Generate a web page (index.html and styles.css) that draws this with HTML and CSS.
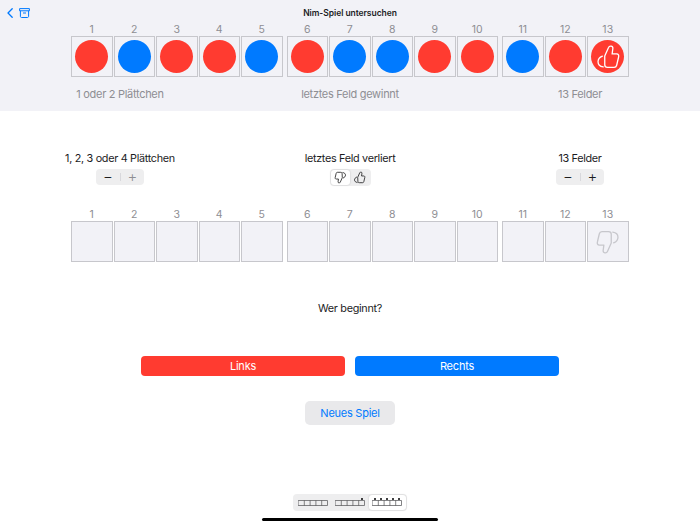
FILE: index.html
```html
<!DOCTYPE html>
<html lang="de">
<head>
  <meta charset="UTF-8">
  <meta name="viewport" content="width=device-width, initial-scale=1.0">
  <title>Nim-Spiel untersuchen</title>
  <link rel="stylesheet" href="styles.css">
</head>
<body>
  <!-- Icons -->
  <svg class="defs" width="0" height="0">
    <symbol id="thumb" viewBox="0 0 24 24">
      <path d="M9 11 L12.5 3.2 C13.3 1.3 16.7 1.6 16.5 4 L15.8 9.2 H20 C21.6 9.2 22.2 10.6 21.8 12 L20 19.6 C19.7 20.9 18.8 21.6 17.6 21.6 H11.5 C10 21.6 9 20.7 9 19.2 Z"/>
      <path d="M6.8 11.2 C4.3 12.2 2.8 14.2 2.8 16.4 C2.8 18.8 4.6 20.8 7.6 21.2"/>
    </symbol>
    <symbol id="mini" viewBox="0 0 30 10">
      <path d="M.5 2.5 H29.5 V7.5 H.5 Z M6.3 2.5 V7.5 M12.1 2.5 V7.5 M17.9 2.5 V7.5 M23.7 2.5 V7.5"/>
    </symbol>
  </svg>

  <!-- Played game -->
  <div class="top">
    <div class="toolbar">
      <div class="tools">
        <svg class="back" viewBox="0 0 6 10"><path d="M5.2 .8 L1 5 L5.2 9.2"/></svg>
        <svg class="archive" viewBox="0 0 11 10"><path d="M.6 .6 H10.4 V2.8 H.6 Z M1.4 2.8 V8.4 C1.4 9 1.9 9.5 2.5 9.5 H8.5 C9.1 9.5 9.6 9 9.6 8.4 V2.8 M4 5 H7"/></svg>
      </div>
      <h1>Nim-Spiel untersuchen</h1>
    </div>
    <div class="board">
      <div class="group">
        <div class="slot"><span>1</span><div class="cell"><i class="chip red"></i></div></div>
        <div class="slot"><span>2</span><div class="cell"><i class="chip blue"></i></div></div>
        <div class="slot"><span>3</span><div class="cell"><i class="chip red"></i></div></div>
        <div class="slot"><span>4</span><div class="cell"><i class="chip red"></i></div></div>
        <div class="slot"><span>5</span><div class="cell"><i class="chip blue"></i></div></div>
      </div>
      <div class="group">
        <div class="slot"><span>6</span><div class="cell"><i class="chip red"></i></div></div>
        <div class="slot"><span>7</span><div class="cell"><i class="chip blue"></i></div></div>
        <div class="slot"><span>8</span><div class="cell"><i class="chip blue"></i></div></div>
        <div class="slot"><span>9</span><div class="cell"><i class="chip red"></i></div></div>
        <div class="slot"><span>10</span><div class="cell"><i class="chip red"></i></div></div>
      </div>
      <div class="group">
        <div class="slot"><span>11</span><div class="cell"><i class="chip blue"></i></div></div>
        <div class="slot"><span>12</span><div class="cell"><i class="chip red"></i></div></div>
        <div class="slot"><span>13</span><div class="cell"><i class="chip red"><svg class="thumb-win"><use href="#thumb"/></svg></i></div></div>
      </div>
    </div>
    <div class="captions">
      <p>1 oder 2 Plättchen</p>
      <p>letztes Feld gewinnt</p>
      <p>13 Felder</p>
    </div>
  </div>

  <!-- Settings -->
  <div class="settings">
    <div class="setting">
      <p>1, 2, 3 oder 4 Plättchen</p>
      <div class="stepper">
        <button class="step">−</button>
        <button class="step off">+</button>
      </div>
    </div>
    <div class="setting">
      <p>letztes Feld verliert</p>
      <div class="segment">
        <button class="seg active"><svg class="thumb-small down"><use href="#thumb"/></svg></button>
        <button class="seg"><svg class="thumb-small"><use href="#thumb"/></svg></button>
      </div>
    </div>
    <div class="setting">
      <p>13 Felder</p>
      <div class="stepper">
        <button class="step">−</button>
        <button class="step">+</button>
      </div>
    </div>
  </div>

  <div class="board board-empty">
    <div class="group">
      <div class="slot"><span>1</span><div class="cell"></div></div>
      <div class="slot"><span>2</span><div class="cell"></div></div>
      <div class="slot"><span>3</span><div class="cell"></div></div>
      <div class="slot"><span>4</span><div class="cell"></div></div>
      <div class="slot"><span>5</span><div class="cell"></div></div>
    </div>
    <div class="group">
      <div class="slot"><span>6</span><div class="cell"></div></div>
      <div class="slot"><span>7</span><div class="cell"></div></div>
      <div class="slot"><span>8</span><div class="cell"></div></div>
      <div class="slot"><span>9</span><div class="cell"></div></div>
      <div class="slot"><span>10</span><div class="cell"></div></div>
    </div>
    <div class="group">
      <div class="slot"><span>11</span><div class="cell"></div></div>
      <div class="slot"><span>12</span><div class="cell"></div></div>
      <div class="slot"><span>13</span><div class="cell"><svg class="thumb-lose"><use href="#thumb"/></svg></div></div>
    </div>
  </div>

  <p class="question">Wer beginnt?</p>

  <div class="starters">
    <button class="starter red">Links</button>
    <button class="starter blue">Rechts</button>
  </div>

  <div class="new-row">
    <button class="new-game">Neues Spiel</button>
  </div>

  <!-- Mode picker -->
  <div class="picker">
    <button class="pick">
      <svg class="mini"><use href="#mini"/></svg>
    </button>
    <button class="pick">
      <svg class="mini"><use href="#mini"/></svg>
      <i class="dots"><b></b></i>
    </button>
    <button class="pick current">
      <svg class="mini"><use href="#mini"/></svg>
      <i class="dots"><b></b><b></b><b></b><b></b><b></b></i>
    </button>
  </div>

  <div class="home-bar"></div>
</body>
</html>
```

FILE: styles.css
```css
* {
  box-sizing: border-box;
}

html, body {
  height: 525px;
}

body {
  font-family: Inter, "Liberation Sans", sans-serif;
  margin: 0;
  padding: 0;
  background-color: white;
  color: #1c1c1e;
  overflow: hidden;
  position: relative;
}

p {
  margin: 0;
}

button {
  font-family: inherit;
  border: none;
  padding: 0;
}

.defs {
  position: absolute;
}

symbol path {
  fill: none;
  stroke-linecap: round;
  stroke-linejoin: round;
}

/* Top band */
.top {
  background-color: #f2f2f7;
  height: 111px;
}

.toolbar {
  height: 23px;
  position: relative;
  display: flex;
  justify-content: center;
  padding-top: 8px;
}

.toolbar h1 {
  margin: 0;
  font-size: 8.5px;
  line-height: 11px;
  font-weight: 600;
  color: #1c1c1e;
  letter-spacing: -0.05px;
}

.tools {
  position: absolute;
  left: 7px;
  top: 8px;
  display: flex;
  align-items: flex-start;
  gap: 6px;
}

.back {
  width: 6px;
  height: 10px;
  fill: none;
  stroke: #007aff;
  stroke-width: 1.3;
  stroke-linecap: round;
  stroke-linejoin: round;
}

.archive {
  width: 11px;
  height: 10px;
  fill: none;
  stroke: #007aff;
  stroke-width: 1;
}

/* Boards */
.board {
  display: flex;
  gap: 4px;
  padding-left: 71px;
}

.board-empty {
  margin-top: 22px;
}

.group {
  display: flex;
  gap: 1px;
}

.slot {
  width: 41.5px;
}

.slot span {
  display: block;
  text-align: center;
  font-size: 10.5px;
  line-height: 13px;
  color: #8e8e93;
}

.cell {
  height: 41px;
  border: 1px solid #c7c7cc;
  background-color: #f2f2f7;
  display: flex;
  align-items: center;
  justify-content: center;
}

.chip {
  display: flex;
  align-items: center;
  justify-content: center;
  width: 33px;
  height: 33px;
  border-radius: 50%;
}

.red {
  background-color: #ff3b30;
}

.blue {
  background-color: #007aff;
}

.thumb-win {
  width: 26px;
  height: 26px;
  stroke: white;
  stroke-width: 1.2;
}

.thumb-lose {
  width: 26px;
  height: 26px;
  stroke: #c7c7cc;
  stroke-width: 1.2;
  transform: rotate(180deg);
}

.captions, .settings {
  display: grid;
  grid-template-columns: repeat(3, 230px);
  padding-left: 5px;
  text-align: center;
}

.captions {
  margin-top: 10px;
  font-size: 11px;
  line-height: 14px;
  letter-spacing: -0.3px;
  color: #8e8e93;
}

/* Settings */
.settings {
  margin-top: 41px;
  font-size: 10.8px;
  line-height: 14px;
  letter-spacing: -0.3px;
}

.setting {
  display: flex;
  flex-direction: column;
  align-items: center;
  gap: 3px;
}

.stepper {
  display: flex;
  align-items: center;
  width: 48px;
  height: 16px;
  border-radius: 4px;
  background-color: #eeeeef;
}

.step {
  width: 24px;
  height: 16px;
  font-size: 15px;
  font-weight: 300;
  line-height: 16px;
  background: none;
  color: #1c1c1e;
}

.step + .step {
  border-left: 1px solid #d8d8dc;
  height: 8px;
  line-height: 8px;
}

.step.off {
  color: #8e8e93;
}

.segment {
  display: flex;
  width: 41px;
  height: 17px;
  padding: 1px;
  border-radius: 4px;
  background-color: #eeeeef;
}

.seg {
  flex: 1;
  display: flex;
  align-items: center;
  justify-content: center;
  background: none;
  border-radius: 3px;
}

.seg.active {
  background-color: white;
  box-shadow: 0 0 2px rgba(0, 0, 0, 0.2);
}

.thumb-small {
  width: 13px;
  height: 13px;
  stroke: #1c1c1e;
  stroke-width: 1.5;
}

.thumb-small.down {
  transform: rotate(180deg);
}

.question {
  margin-top: 40px;
  text-align: center;
  font-size: 10.8px;
  line-height: 14px;
  letter-spacing: -0.3px;
}

/* Buttons */
.starters {
  margin-top: 40px;
  display: flex;
  justify-content: center;
  gap: 10px;
}

.starter {
  width: 204px;
  height: 20px;
  border-radius: 4px;
  color: white;
  font-size: 11px;
  letter-spacing: -0.2px;
}

.new-row {
  margin-top: 25px;
  display: flex;
  justify-content: center;
}

.new-game {
  width: 90px;
  height: 24px;
  border-radius: 5px;
  background-color: #e9e9eb;
  color: #007aff;
  font-size: 11px;
  letter-spacing: -0.25px;
}

/* Bottom picker */
.picker {
  position: absolute;
  left: 293px;
  top: 494px;
  width: 114px;
  height: 17px;
  display: flex;
  padding: 1px;
  border-radius: 4px;
  background-color: #eeeeef;
}

.pick {
  flex: 1;
  position: relative;
  display: flex;
  align-items: center;
  justify-content: center;
  background: none;
  border-radius: 3px;
}

.pick.current {
  background-color: white;
  box-shadow: 0 0 2px rgba(0, 0, 0, 0.2);
}

.mini {
  width: 30px;
  height: 10px;
  stroke: #636366;
  stroke-width: 0.8;
}

.dots {
  position: absolute;
  right: 6px;
  top: 3px;
  display: flex;
  gap: 4.5px;
}

.dots b {
  width: 1.5px;
  height: 1.5px;
  border-radius: 50%;
  background-color: #1c1c1e;
}

.home-bar {
  position: absolute;
  left: 262px;
  top: 518px;
  width: 176px;
  height: 3px;
  border-radius: 2px;
  background-color: black;
}
```
